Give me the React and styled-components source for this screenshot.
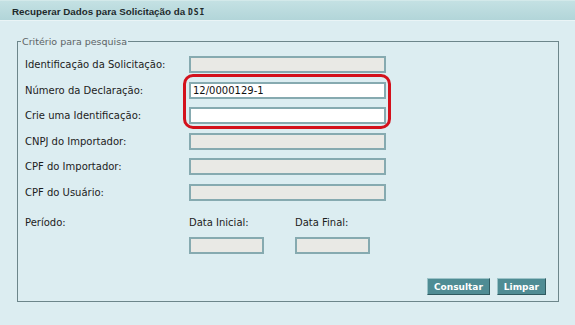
import React from 'react';
import styled, { createGlobalStyle } from 'styled-components';

const GlobalStyle = createGlobalStyle`
  html, body {
    margin: 0;
    padding: 0;
    background: #dcedf1;
  }
`;

const fields = [
  { label: 'Identificação da Solicitação:', value: '', enabled: false },
  { label: 'Número da Declaração:', value: '12/0000129-1', enabled: true },
  { label: 'Crie uma Identificação:', value: '', enabled: true },
  { label: 'CNPJ do Importador:', value: '', enabled: false },
  { label: 'CPF do Importador:', value: '', enabled: false },
  { label: 'CPF do Usuário:', value: '', enabled: false },
];

function App() {
  return (
    <Page>
      <GlobalStyle />
      <Header>
        Recuperar Dados para Solicitação da <Acronym>DSI</Acronym>
      </Header>
      <Content>
        <Fieldset>
          <Legend>Critério para pesquisa</Legend>
          <Form>
            {fields.map((f) => (
              <React.Fragment key={f.label}>
                <Label>{f.label}</Label>
                <Input $enabled={f.enabled} $wide>
                  {f.value}
                </Input>
              </React.Fragment>
            ))}
            <Label $tall>Período:</Label>
            <Label $tall>Data Inicial:</Label>
            <Label $tall>Data Final:</Label>
            <span />
            <Input $date />
            <Input $date />
            <Highlight />
          </Form>
          <Actions>
            <Button>Consultar</Button>
            <Button>Limpar</Button>
          </Actions>
        </Fieldset>
      </Content>
    </Page>
  );
}

const Page = styled.div`
  width: 575px;
  height: 325px;
  background: #dcedf1;
  font-family: 'DejaVu Sans', Verdana, sans-serif;
`;

const Header = styled.div`
  height: 21px;
  box-sizing: border-box;
  padding: 5px 0 0 12px;
  background: linear-gradient(#c4e1e3, #b2d5d9);
  border-top: 1px solid #d3e9ea;
  border-bottom: 1px solid #eaf4f6;
  font-family: 'Liberation Sans', Arial, sans-serif;
  font-weight: bold;
  font-size: 9.8px;
  color: #1e2a2c;
`;

const Acronym = styled.span`
  font-family: 'DejaVu Sans Mono', monospace;
  font-size: 8px;
  letter-spacing: 1px;
`;

const Content = styled.div`
  padding: 15px 16px 0 17px;
`;

const Fieldset = styled.fieldset`
  margin: 0;
  height: 266px;
  box-sizing: border-box;
  padding: 6px 12px 0 7px;
  border: 1px solid #6d868b;
  border-radius: 0;
  display: flex;
  flex-direction: column;
`;

const Legend = styled.legend`
  margin-left: -4px;
  padding: 0 1px;
  font-size: 9.5px;
  color: #5c6466;
`;

const Form = styled.div`
  position: relative;
  display: grid;
  grid-template-columns: 164px 106px 1fr;
  grid-auto-rows: 17px;
  row-gap: 8.6px;
  align-items: center;
  margin-top: 3px;
`;

const Label = styled.div`
  grid-column: ${(p) => (p.$tall ? 'auto' : '1')};
  font-size: 10px;
  color: #1c1c1c;
  white-space: nowrap;
  margin-top: ${(p) => (p.$tall ? '8px' : '0')};
`;

const Input = styled.div`
  grid-column: ${(p) => (p.$wide ? '2 / span 2' : 'auto')};
  width: ${(p) => (p.$wide ? '197px' : '75px')};
  height: 17px;
  margin-top: ${(p) => (p.$date ? '3px' : '0')};
  box-sizing: border-box;
  border: 2px solid #86aab0;
  background: ${(p) => (p.$enabled ? '#ffffff' : '#e9e9e5')};
  padding: 1px 2px 0;
  font-size: 10px;
  line-height: 12px;
  color: #111;
`;

const Highlight = styled.div`
  position: absolute;
  left: 158px;
  top: 18px;
  width: 208px;
  height: 55px;
  box-sizing: border-box;
  border: 3px solid #d3111c;
  border-radius: 10px;
  pointer-events: none;
`;

const Actions = styled.div`
  display: flex;
  justify-content: flex-end;
  gap: 7px;
  margin-top: 26px;
`;

const Button = styled.button`
  height: 17px;
  padding: 0 6px;
  background: #4f8c94;
  color: #fff;
  font-family: 'DejaVu Sans', Verdana, sans-serif;
  font-weight: bold;
  font-size: 9px;
  border: 1px solid;
  border-color: #9cc3c8 #2f5a60 #2f5a60 #9cc3c8;
  border-radius: 0;
  cursor: pointer;
`;

export default App;
